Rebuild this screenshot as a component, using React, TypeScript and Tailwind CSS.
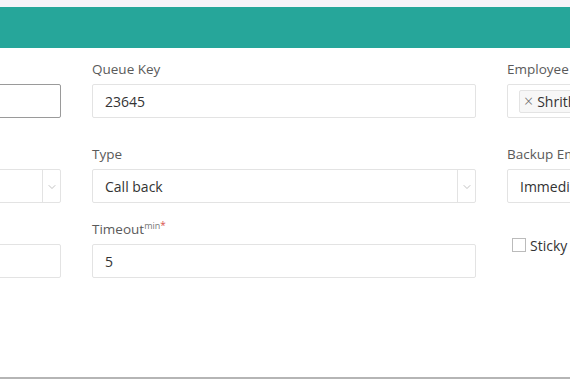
import { ChevronDown } from 'lucide-react';

const font = { fontFamily: '"Open Sans", "Noto Sans", sans-serif' };

function Label({ children }: { children: React.ReactNode }) {
	return (
		<div className="h-[25px] text-[13.5px] leading-[20px] text-[#5a5a5a]">
			{children}
		</div>
	);
}

function TextBox({ value, dark }: { value?: string; dark?: boolean }) {
	return (
		<div
			className={
				'flex h-[34px] items-center rounded-[2px] border bg-white px-[12px] text-[14px] text-[#333] ' +
				(dark ? 'border-[#9a9a9a]' : 'border-[#e3e3e3]')
			}
		>
			{value}
		</div>
	);
}

function SelectBox({ value }: { value?: string }) {
	return (
		<div className="flex h-[34px] items-stretch rounded-[2px] border border-[#e3e3e3] bg-white text-[14px] text-[#333]">
			<div className="flex flex-1 items-center px-[12px]">{value}</div>
			<div className="flex w-[18px] items-center justify-center border-l border-[#e3e3e3]">
				<ChevronDown size={12} strokeWidth={1.2} className="mt-[1px] text-[#999]" />
			</div>
		</div>
	);
}

function Column({ children }: { children: React.ReactNode }) {
	return <div className="flex w-[384px] shrink-0 flex-col">{children}</div>;
}

export default function App() {
	return (
		<div className="relative h-[379px] w-[570px] overflow-hidden bg-white" style={font}>
			<div className="h-[7px] bg-[#f6f3f8]" />
			<div className="h-[41px] bg-[#26a69a]" />

			<div className="ml-[-323px] flex gap-[31px] pt-[11px]">
				<Column>
					<Label>&nbsp;</Label>
					<TextBox dark />
					<div className="h-[26px]" />
					<Label>&nbsp;</Label>
					<SelectBox />
					<div className="h-[16px]" />
					<Label>&nbsp;</Label>
					<TextBox />
				</Column>

				<Column>
					<Label>Queue Key</Label>
					<TextBox value="23645" />
					<div className="h-[26px]" />
					<Label>Type</Label>
					<SelectBox value="Call back" />
					<div className="h-[16px]" />
					<Label>
						Timeout
						<span className="relative top-[-5px] text-[9px] text-[#777]">min</span>
						<span className="relative top-[-5px] text-[10px] text-[#d9534f]">*</span>
					</Label>
					<TextBox value="5" />
				</Column>

				<Column>
					<Label>Employee</Label>
					<div className="flex h-[34px] items-center rounded-[2px] border border-[#e3e3e3] bg-white px-[11px]">
						<span className="flex h-[23px] items-center gap-[4px] rounded-[2px] border border-[#e3e3e3] bg-[#f7f7f7] px-[4px] text-[14px] text-[#333]">
							<span className="text-[16px] leading-none font-light text-[#666]">×</span>
							Shrithi Kumar
						</span>
					</div>
					<div className="h-[26px]" />
					<Label>Backup Employee</Label>
					<SelectBox value="Immediate" />
					<label className="mt-[35px] flex h-[14px] items-center gap-[4px] pl-[5px] text-[14px] text-[#333]">
						<span className="h-[14px] w-[14px] border border-[#bbb] bg-white" />
						Sticky
					</label>
				</Column>
			</div>

			<div className="absolute bottom-0 left-0 h-[2px] w-full bg-[#b5b5b5]" />
		</div>
	);
}
